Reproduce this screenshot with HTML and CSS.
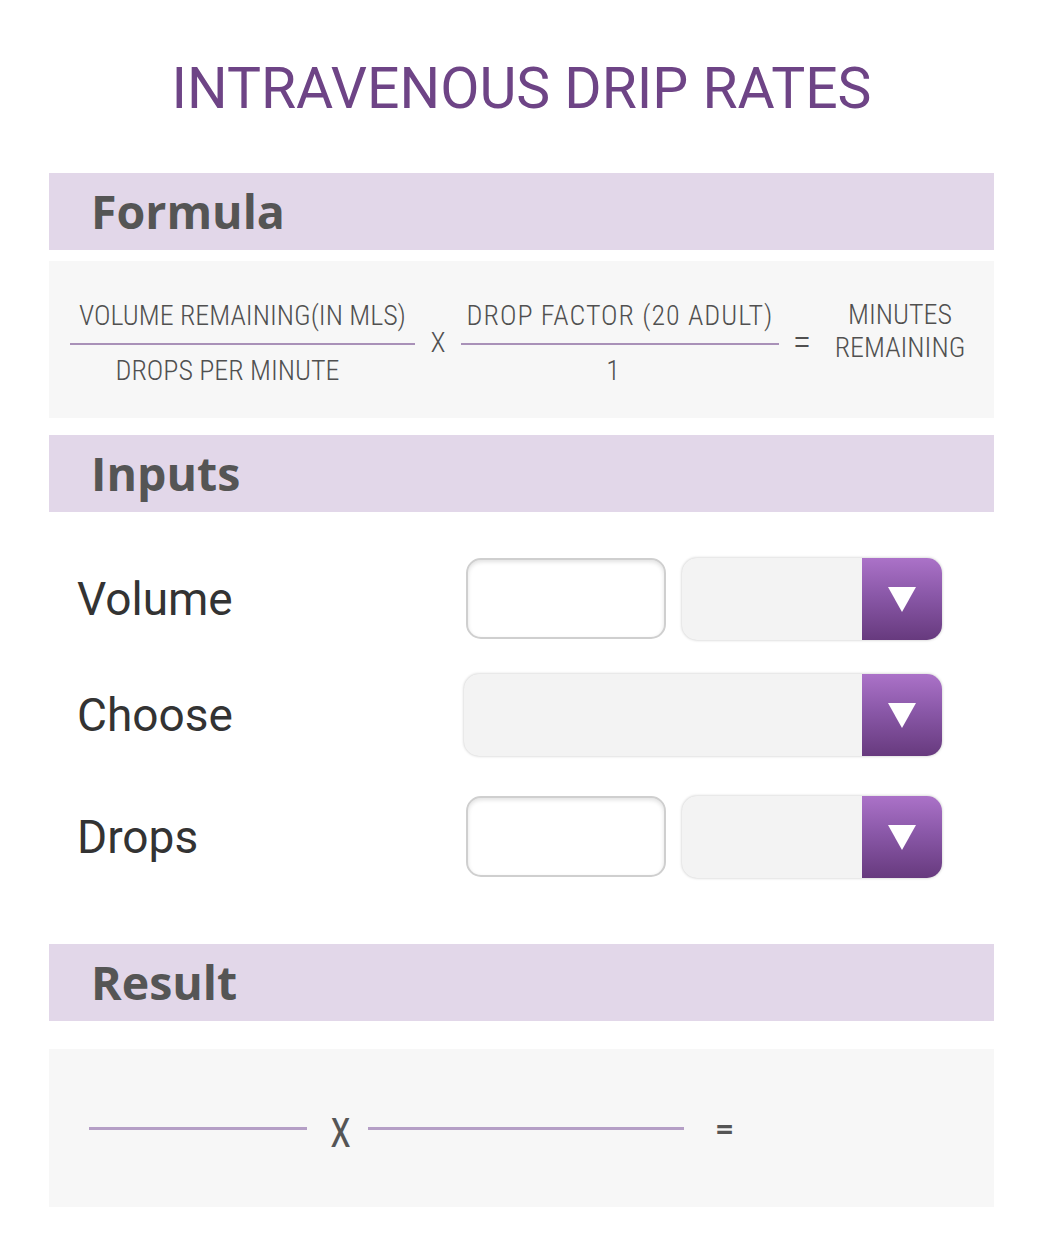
FILE: index.html
```html
<!DOCTYPE html>
<html>
<head>
<meta charset="utf-8">
<link rel="stylesheet" href="styles.css">
</head>
<body>
<div class="page">
  <h1 class="title">INTRAVENOUS DRIP RATES</h1>

  <div class="band"><h2>Formula</h2></div>
  <div class="formula">
    <div class="frac frac1">
      <div class="num">VOLUME REMAINING(IN MLS)</div>
      <div class="den">DROPS PER MINUTE</div>
    </div>
    <div class="op op-x">X</div>
    <div class="frac frac2">
      <div class="num">DROP FACTOR (20 ADULT)</div>
      <div class="den">1</div>
    </div>
    <div class="op op-eq">=</div>
    <div class="answer">MINUTES<br>REMAINING</div>
  </div>

  <div class="band"><h2>Inputs</h2></div>
  <div class="inputs">
    <div class="row">
      <div class="label">Volume</div>
      <div class="controls">
        <div class="textbox"></div>
        <div class="select small"><div class="btn"><span class="tri"></span></div></div>
      </div>
    </div>
    <div class="row">
      <div class="label">Choose</div>
      <div class="controls">
        <div class="select wide"><div class="btn"><span class="tri"></span></div></div>
      </div>
    </div>
    <div class="row">
      <div class="label">Drops</div>
      <div class="controls">
        <div class="textbox"></div>
        <div class="select small"><div class="btn"><span class="tri"></span></div></div>
      </div>
    </div>
  </div>

  <div class="band"><h2>Result</h2></div>
  <div class="result">
    <div class="rline rline1"></div>
    <div class="rop rx">X</div>
    <div class="rline rline2"></div>
    <div class="rop req">=</div>
  </div>
</div>
</body>
</html>
```

FILE: styles.css
```css
* { box-sizing: border-box; }
html, body { margin: 0; padding: 0; background: #ffffff; }
body { font-family: Roboto, "Noto Sans", sans-serif; }
.page {
  width: 945px;
  margin-left: 49px;
  padding-top: 56px;
}
.title {
  margin: 0;
  text-align: center;
  font-family: Roboto, sans-serif;
  font-weight: 400;
  font-size: 57px;
  line-height: 66px;
  color: #6e4486;
  margin-bottom: 51px;
}
.band {
  background: #e2d7e9;
  height: 77px;
  display: flex;
  align-items: center;
  padding-left: 42px;
}
.band h2 {
  margin: 0;
  font-family: "Open Sans", sans-serif;
  font-weight: 700;
  font-size: 46.5px;
  color: #555555;
  line-height: 1;
}
.formula {
  margin-top: 11px;
  background: #f7f7f7;
  height: 157px;
  display: flex;
  align-items: center;
  padding-left: 21px;
  color: #505050;
  font-size: 28px;
  font-weight: 300;
  font-stretch: condensed;
  margin-bottom: 17px;
}
.frac { display: flex; flex-direction: column; align-items: center; margin-top: 8px; }
.frac .num {
  padding-bottom: 11px;
  border-bottom: 2px solid #a991b8;
  text-align: center;
  line-height: 32px;
}
.frac .den { line-height: 32px; padding-top: 10px; text-align: center; }
.frac1 { width: 345px; }
.frac1 .num, .frac2 .num { width: 100%; }
.frac1 .den { padding-right: 30px; }
.frac2 { width: 318px; }
.frac2 .num { letter-spacing: 1px; }
.frac2 .den { padding-right: 14px; }
.op { font-size: 28px; }
.op-x { width: 46px; text-align: center; padding-top: 6px; }
.op-eq { width: 46px; text-align: center; font-size: 38px; padding-top: 4px; }
.answer { width: 150px; text-align: center; line-height: 33px; margin-bottom: 18px; }

.inputs { padding-top: 46px; padding-bottom: 66px; }
.row {
  display: flex;
  align-items: center;
  height: 82px;
  margin-bottom: 34px;
}
.row:nth-child(2) { margin-bottom: 40px; }
.row:last-child { margin-bottom: 0; }
.label {
  width: 417px;
  padding-left: 28px;
  font-size: 46px;
  color: #333333;
}
.controls { display: flex; gap: 16px; }
.textbox {
  width: 200px;
  height: 81px;
  background: #ffffff;
  border: 2px solid #cfcfcf;
  border-radius: 15px;
  box-shadow: inset 0 2px 4px rgba(0,0,0,0.12);
}
.select {
  height: 82px;
  background: #f3f3f3;
  border-radius: 15px;
  box-shadow: 0 0 3px rgba(0,0,0,0.25);
  display: flex;
  justify-content: flex-end;
  overflow: hidden;
}
.select.small { width: 260px; }
.select.wide { width: 478px; margin-left: -2px; }
.btn {
  width: 80px;
  height: 100%;
  background: linear-gradient(to bottom, #ab72c8 0%, #8a58a8 45%, #673a7e 100%);
  display: flex;
  align-items: center;
  justify-content: center;
}
.tri {
  width: 0; height: 0;
  border-left: 14px solid transparent;
  border-right: 14px solid transparent;
  border-top: 25px solid #ffffff;
  margin-left: -1px;
}
.result {
  margin-top: 28px;
  background: #f7f7f7;
  height: 158px;
  display: flex;
  align-items: center;
  padding-left: 40px;
}
.rline { height: 3px; background: #b59fc6; }
.rline1 { width: 218px; }
.rline2 { width: 316px; }
.rop { color: #555555; font-family: "Open Sans", sans-serif; font-weight: 600; }
.rx { width: 61px; text-align: center; font-size: 30px; transform: scaleY(1.3); padding-top: 6px; padding-left: 6px; }
.req { width: 50px; margin-left: 32px; font-size: 30px; font-weight: 700; }
```
